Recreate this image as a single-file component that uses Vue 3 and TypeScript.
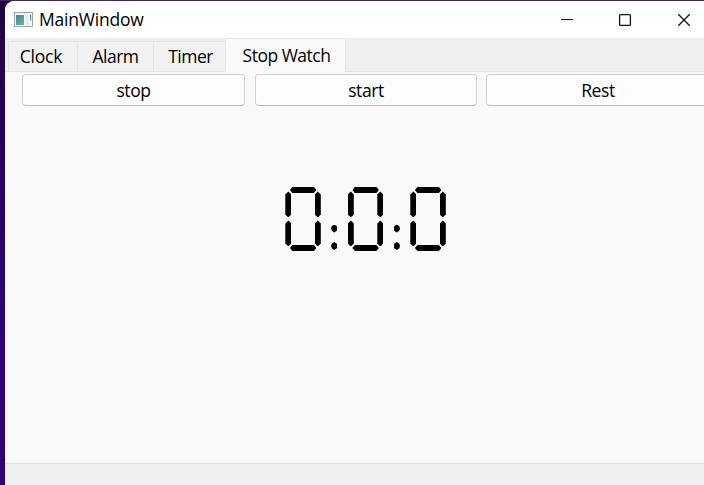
<script setup lang="ts">
import { computed, ref } from 'vue'

const tabs = [
  { label: 'Clock', cls: 'clock' },
  { label: 'Alarm', cls: 'alarm' },
  { label: 'Timer', cls: 'timer' },
  { label: 'Stop Watch', cls: 'stopwatch' },
]
const active = ref('stopwatch')
const time = ref([0, 0, 0])

// Lit segments per digit: a top, b/c right, d bottom, e/f left, g middle
const segments = ['abcdef', 'bc', 'abged', 'abgcd', 'fgbc', 'afgcd', 'afgedc', 'abc', 'abcdefg', 'abcdfg']
const cells = computed(() => time.value.join(':').split(''))
</script>

<template>
  <div class="desktop">
    <div class="window">
      <header class="titlebar">
        <svg class="app-icon" width="19" height="16" viewBox="0 0 19 16">
          <defs>
            <linearGradient id="pane" x1="0" y1="0" x2="0.6" y2="1">
              <stop offset="0" stop-color="#4780a5" />
              <stop offset="1" stop-color="#62b487" />
            </linearGradient>
            <linearGradient id="strip" x1="0" y1="0" x2="0" y2="1">
              <stop offset="0" stop-color="#3d6fc4" />
              <stop offset="1" stop-color="#7cc98d" />
            </linearGradient>
          </defs>
          <rect x="0.5" y="0.5" width="18" height="14" fill="#f5f6f7" stroke="#9ca4ab" />
          <rect x="2" y="3" width="8" height="10" fill="url(#pane)" />
          <rect x="11.5" y="3" width="3" height="10" fill="#e6e9ea" />
          <rect x="16" y="3" width="1.2" height="6" fill="url(#strip)" />
        </svg>
        <span class="title">MainWindow</span>
        <svg class="controls" width="132" height="14" viewBox="0 0 132 14" fill="none" stroke="#111">
          <path d="M1 6.5H13" stroke-width="1.2" />
          <rect x="59.6" y="1.6" width="10.8" height="10.8" rx="1" stroke-width="1.3" />
          <path d="M118.3 1.3L129.7 12.7M129.7 1.3L118.3 12.7" stroke-width="1.3" />
        </svg>
      </header>
      <nav class="tabs">
        <div
          v-for="tab in tabs"
          :key="tab.cls"
          class="tab"
          :class="[tab.cls, { active: active === tab.cls }]"
          @click="active = tab.cls"
        ><span>{{ tab.label }}</span></div>
      </nav>
      <main class="pane">
        <div class="buttons">
          <button class="btn">stop</button>
          <button class="btn">start</button>
          <button class="btn">Rest</button>
        </div>
        <div class="lcd">
          <template v-for="(cell, i) in cells" :key="i">
            <div v-if="cell === ':'" class="colon"><i></i><i></i></div>
            <div v-else class="digit">
              <i v-for="s in segments[Number(cell)]" :key="s" class="seg" :class="s"></i>
            </div>
          </template>
        </div>
      </main>
      <footer class="statusbar"></footer>
    </div>
  </div>
</template>

<style>
body {
  margin: 0;
  overflow: hidden;
}
</style>

<style scoped>
.desktop {
  box-sizing: border-box;
  width: 704px;
  height: 485px;
  padding: 1px 0 0 5px;
  overflow: hidden;
  background: linear-gradient(#1f0640, #25035a 25%, #300080 70%, #32007c);
  box-shadow: inset 0 1px #43254e;
  font-family: "Open Sans", "Noto Sans", sans-serif;
  font-size: 17.5px;
  color: #000;
}
.window {
  display: flex;
  flex-direction: column;
  height: 484px;
  border-radius: 9px 0 0 0;
  overflow: hidden;
  background: #f9f9f9;
}
.titlebar {
  display: flex;
  align-items: center;
  flex: none;
  height: 37px;
  background: #fff;
}
.app-icon {
  margin-left: 9px;
}
.title {
  margin-left: 6px;
  padding-bottom: 2px;
  letter-spacing: -0.2px;
}
.controls {
  margin-left: auto;
  margin-right: 12px;
}
.tabs {
  display: flex;
  align-items: flex-end;
  flex: none;
  box-sizing: border-box;
  height: 34px;
  padding-left: 3px;
  background: #efefef;
  box-shadow: inset 0 -1px #e3e3e3;
}
.tab {
  box-sizing: border-box;
  display: flex;
  align-items: center;
  justify-content: center;
  height: 31px;
  padding-bottom: 2px;
  border: 1px solid #e4e4e4;
  border-right: 0;
  background: #f2f2f2;
  letter-spacing: -0.5px;
  white-space: nowrap;
}
.clock { width: 69px; padding-right: 4px; letter-spacing: -0.2px; }
.alarm { width: 76px; }
.timer { width: 72px; padding-left: 2px; }
.stopwatch { width: 121px; padding-left: 2px; }
.tab.active {
  height: 34px;
  border-right: 1px solid #e4e4e4;
  border-bottom: 0;
  background: #f9f9f9;
}
.pane {
  flex: 1;
  min-height: 0;
  padding-top: 2px;
}
.buttons {
  display: grid;
  grid-template-columns: 223px 222px 223px;
  column-gap: 10px;
  padding-left: 17px;
}
.btn {
  height: 32px;
  padding: 0;
  border: 1px solid #d0d0d0;
  border-bottom-color: #b9b9b9;
  border-radius: 4px;
  background: #fdfdfd;
  font: inherit;
  color: inherit;
  letter-spacing: -0.4px;
}
.btn:last-child {
  margin-left: -1px;
}
.lcd {
  display: flex;
  padding: 81px 0 0 280.3px;
}
.digit {
  display: grid;
  grid-template-columns: 5px 1px 24.5px 5px;
  grid-template-rows: 64px;
  width: 35.5px;
  height: 64px;
}
.seg {
  grid-area: 1 / 1;
  background: #000;
}
.a, .d, .g {
  width: 26.5px;
  height: 6px;
  margin-left: 4.6px;
  clip-path: polygon(0 50%, 2.5px 0, calc(100% - 2.5px) 0, 100% 50%, calc(100% - 2.5px) 100%, 2.5px 100%);
}
.d { margin-top: 58px; }
.g { margin-top: 29px; }
.b, .c, .e, .f {
  width: 6px;
  height: 26px;
  margin-top: 4.4px;
  clip-path: polygon(50% 0, 100% 3px, 100% calc(100% - 3px), 50% 100%, 0 calc(100% - 3px), 0 3px);
}
.b, .c { margin-left: 29.5px; }
.c, .e { margin-top: 33.4px; }
.colon {
  display: flex;
  flex-direction: column;
  align-items: center;
  gap: 9.5px;
  width: 27px;
  padding-top: 37.6px;
}
.colon i {
  width: 6.4px;
  height: 8px;
  background: #000;
  clip-path: polygon(50% 0, 90% 22%, 100% 50%, 90% 78%, 50% 100%, 10% 78%, 0 50%, 10% 22%);
}
.statusbar {
  flex: none;
  box-sizing: border-box;
  height: 22px;
  border-top: 1px solid #e2e2e2;
  background: #efefef;
}
</style>
